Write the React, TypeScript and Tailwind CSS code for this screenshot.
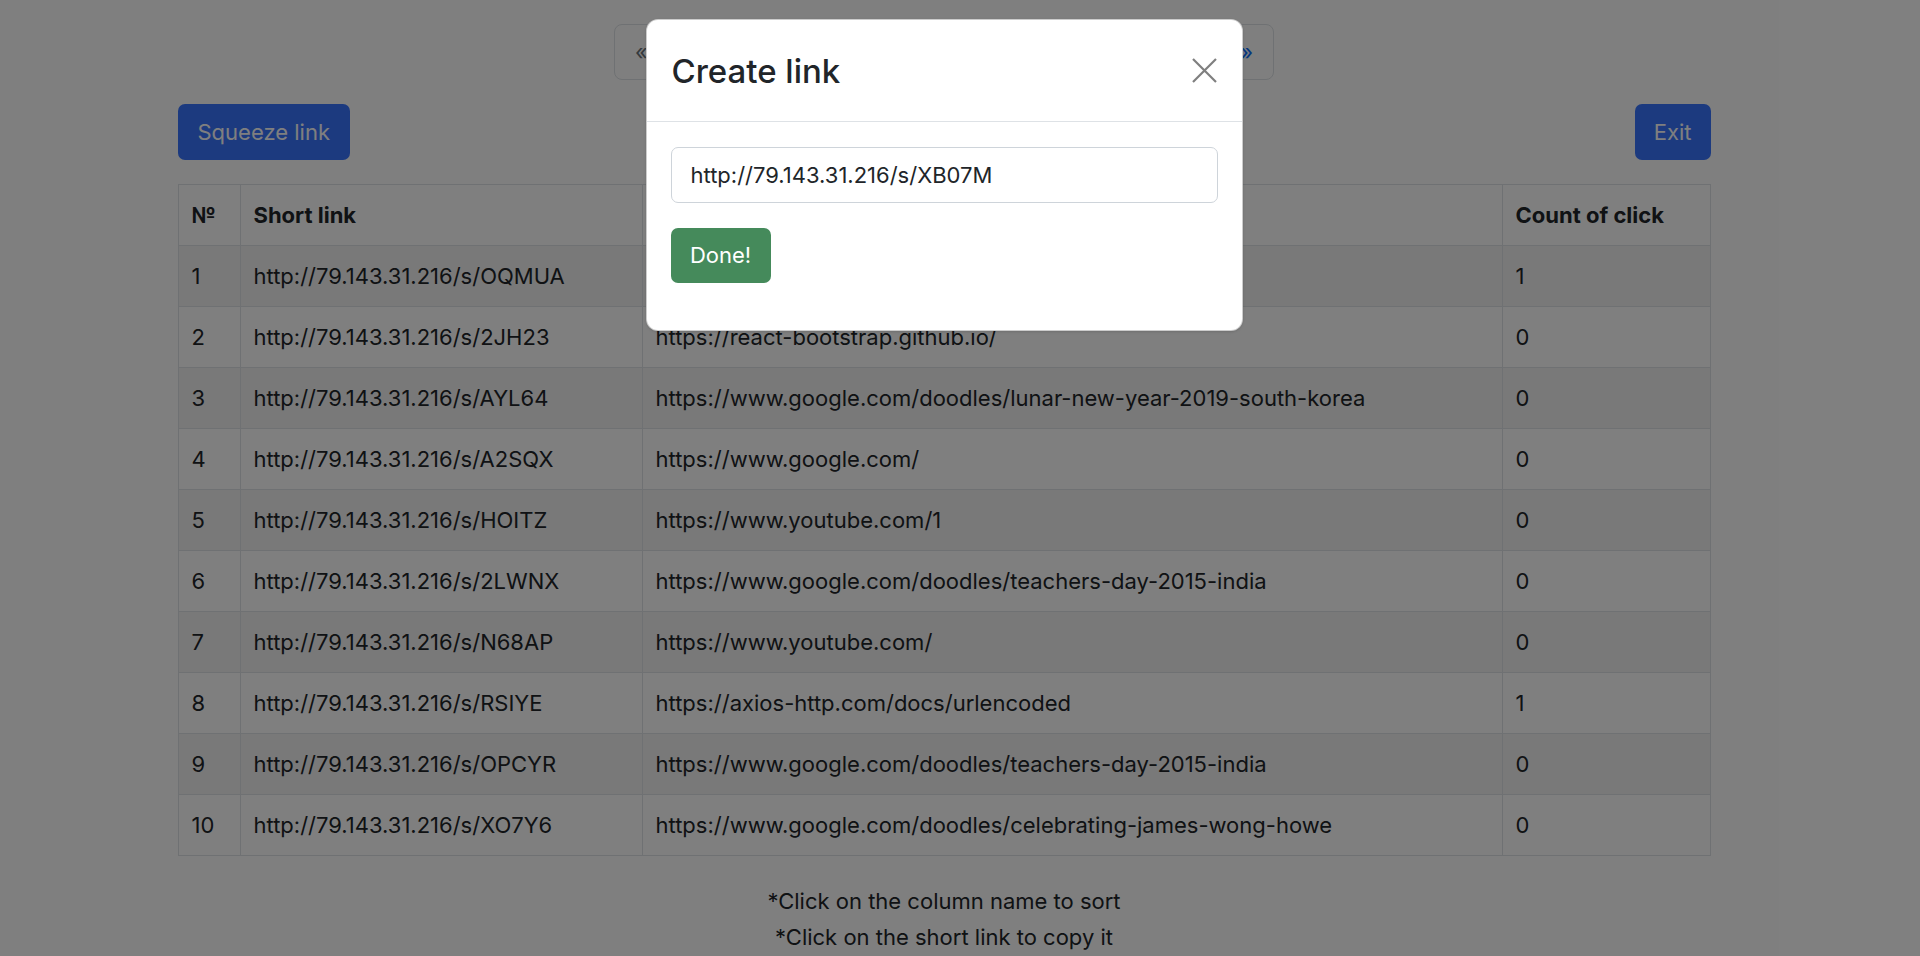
import { useState } from "react";

const rows = [
  { id: 1, short: "http://79.143.31.216/s/OQMUA", long: "https://react-bootstrap.github.io/components/modal/", count: 1 },
  { id: 2, short: "http://79.143.31.216/s/2JH23", long: "https://react-bootstrap.github.io/", count: 0 },
  { id: 3, short: "http://79.143.31.216/s/AYL64", long: "https://www.google.com/doodles/lunar-new-year-2019-south-korea", count: 0 },
  { id: 4, short: "http://79.143.31.216/s/A2SQX", long: "https://www.google.com/", count: 0 },
  { id: 5, short: "http://79.143.31.216/s/HOITZ", long: "https://www.youtube.com/1", count: 0 },
  { id: 6, short: "http://79.143.31.216/s/2LWNX", long: "https://www.google.com/doodles/teachers-day-2015-india", count: 0 },
  { id: 7, short: "http://79.143.31.216/s/N68AP", long: "https://www.youtube.com/", count: 0 },
  { id: 8, short: "http://79.143.31.216/s/RSIYE", long: "https://axios-http.com/docs/urlencoded", count: 1 },
  { id: 9, short: "http://79.143.31.216/s/OPCYR", long: "https://www.google.com/doodles/teachers-day-2015-india", count: 0 },
  { id: 10, short: "http://79.143.31.216/s/XO7Y6", long: "https://www.google.com/doodles/celebrating-james-wong-howe", count: 0 },
];

export default function App() {
  const [link, setLink] = useState("http://79.143.31.216/s/XB07M");

  return (
    <div className="relative min-h-screen bg-white font-['Inter',sans-serif] text-[22px] text-[#212529]">
      <div className="pr-[32px]">
        <div className="mx-auto w-[1533px]">
          {/* pagination */}
          <div className="flex justify-center pt-[24px]">
            <div className="flex h-[56px] w-[660px] items-center justify-between rounded-[8px] border border-[#dee2e6] px-[20px]">
              <span className="text-[#6c757d]">«</span>
              <div className="flex gap-4 text-[#0d6efd]">
                <span>‹</span>
                <span>1</span>
                <span>2</span>
                <span>3</span>
                <span>›</span>
              </div>
              <span className="text-[#0d6efd]">»</span>
            </div>
          </div>

          <div className="mt-[24px] flex justify-between">
            <button className="h-[56px] rounded-[7px] bg-[#3874fe] px-[20px] text-white">
              Squeeze link
            </button>
            <button className="h-[56px] rounded-[7px] bg-[#3874fe] px-[19px] text-white">
              Exit
            </button>
          </div>

          <table className="mt-[24px] w-full border-collapse border border-[#dee2e6]">
            <thead>
              <tr>
                <th className="w-[62px] border border-[#dee2e6] px-[13px] py-[15px] text-left leading-[30px] font-bold">№</th>
                <th className="w-[402px] border border-[#dee2e6] px-[13px] py-[15px] text-left leading-[30px] font-bold">Short link</th>
                <th className="w-[860px] border border-[#dee2e6] px-[13px] py-[15px] text-left leading-[30px] font-bold">Long link</th>
                <th className="border border-[#dee2e6] px-[13px] py-[15px] text-left leading-[30px] font-bold">Count of click</th>
              </tr>
            </thead>
            <tbody>
              {rows.map((r) => (
                <tr key={r.id} className={r.id % 2 === 1 ? "bg-[#f2f2f2]" : "bg-white"}>
                  <td className="border border-[#dee2e6] px-[13px] py-[15px] leading-[30px]">{r.id}</td>
                  <td className="border border-[#dee2e6] px-[13px] py-[15px] leading-[30px]">{r.short}</td>
                  <td className="border border-[#dee2e6] px-[13px] py-[15px] leading-[30px]">{r.long}</td>
                  <td className="border border-[#dee2e6] px-[13px] py-[15px] leading-[30px]">{r.count}</td>
                </tr>
              ))}
            </tbody>
          </table>

          <div className="mt-[27px] text-center leading-[36px]">
            <p>*Click on the column name to sort</p>
            <p>*Click on the short link to copy it</p>
          </div>
        </div>
      </div>

      {/* modal */}
      <div className="absolute inset-0 flex items-start justify-center bg-black/50 pr-[32px] pt-[19px]">
        <div className="w-[597px] rounded-[12px] border border-black/20 bg-white shadow-sm">
          <div className="flex h-[102px] items-center justify-between border-b border-[#dee2e6] px-[25px]">
            <h5 className="pt-[2px] text-[33px] font-medium">Create link</h5>
            <button className="flex h-[25px] w-[25px] items-center justify-center">
              <svg width="25" height="25" viewBox="0 0 25 25" fill="none" stroke="#7f7f7f" strokeWidth="2.2">
                <path d="M1 1L24 24M24 1L1 24" />
              </svg>
            </button>
          </div>
          <div className="px-[24px] pb-[47px] pt-[25px]">
            <input
              value={link}
              onChange={(e) => setLink(e.target.value)}
              className="h-[56px] w-full rounded-[7px] border border-[#ced4da] px-[19px] outline-none"
            />
            <button className="mt-[25px] h-[55px] w-[100px] rounded-[7px] bg-[#458a5b] text-white">
              Done!
            </button>
          </div>
        </div>
      </div>
    </div>
  );
}
